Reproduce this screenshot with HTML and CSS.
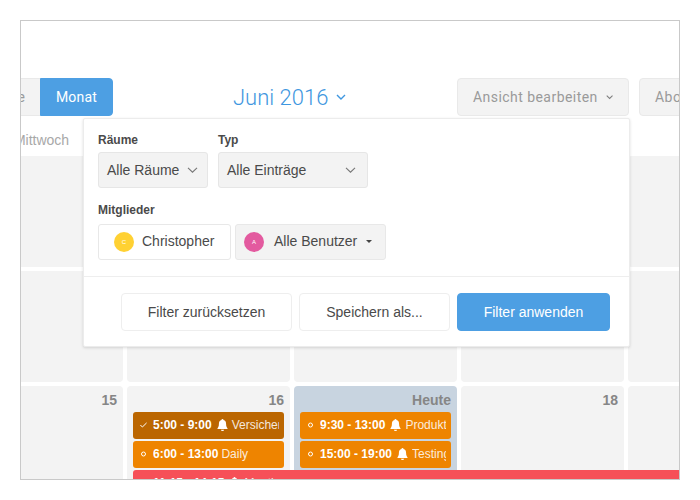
FILE: index.html
```html
<!DOCTYPE html>
<html lang="de">
<head>
<meta charset="utf-8">
<title>Kalender</title>
<link rel="stylesheet" href="styles.css">
</head>
<body>
<div class="frame">
  <header class="toolbar">
    <div class="segment">
      <button class="btn seg-off">Woche</button>
      <button class="btn seg-on">Monat</button>
    </div>
    <div class="title">Juni 2016<svg class="title-chev" width="10" height="6" viewBox="0 0 10 6"><path d="M1 1l4 4 4-4" fill="none" stroke="#3f97e0" stroke-width="1.400"/></svg></div>
    <div class="actions">
      <button class="btn tool">Ansicht bearbeiten
        <svg width="10" height="6" viewBox="0 0 10 6"><path d="M1 1l4 4 4-4" fill="none" stroke="#7d7d7d" stroke-width="1.400"/></svg>
      </button>
      <button class="btn tool">Abonnieren</button>
    </div>
  </header>

  <div class="weekdays">
    <div>Mittwoch</div><div>Donnerstag</div><div>Freitag</div><div>Samstag</div><div>Sonntag</div>
  </div>

  <div class="grid">
    <div class="cell"><span class="date">1</span></div>
    <div class="cell"><span class="date">2</span></div>
    <div class="cell"><span class="date">3</span></div>
    <div class="cell"><span class="date">4</span></div>
    <div class="cell"><span class="date">5</span></div>
    <div class="cell"><span class="date">8</span></div>
    <div class="cell"><span class="date">9</span></div>
    <div class="cell"><span class="date">10</span></div>
    <div class="cell"><span class="date">11</span></div>
    <div class="cell"><span class="date">12</span></div>
    <div class="cell"><span class="date">15</span></div>
    <div class="cell">
      <span class="date">16</span>
      <div class="event dark">
        <svg class="mark" width="7" height="6" viewBox="0 0 7 6"><path d="M.4 3l2 2L6.600.9" fill="none" stroke="#fff" stroke-width="1"/></svg>
        <div class="event-text"><b>5:00 - 9:00</b><svg class="bell" width="11" height="12" viewBox="0 0 11 12"><path d="M5.500 0a1 1 0 0 1 1 1.100c1.800.4 2.600 1.900 2.600 3.800 0 2.200.6 3.300 1.400 4.300v.8H.500v-.8c.8-1 1.400-2.100 1.400-4.300 0-1.900.8-3.400 2.600-3.800a1 1 0 0 1 1-1.100zM3.900 10.700h3.200a1.600 1.300 0 0 1-3.200 0z" fill="#fff"/></svg><span>Versicherung</span></div>
      </div>
      <div class="event">
        <svg class="mark" width="7" height="6" viewBox="0 0 7 6"><circle cx="3.500" cy="3" r="2" fill="none" stroke="#fff" stroke-width="1"/></svg>
        <div class="event-text"><b>6:00 - 13:00</b><span class="plain">Daily</span></div>
      </div>
      <div class="event red">
        <svg class="mark" width="7" height="6" viewBox="0 0 7 6"><circle cx="3.500" cy="3" r="2" fill="none" stroke="#fff" stroke-width="1"/></svg>
        <div class="event-text"><b>11:15 - 14:15</b><svg class="bell" width="11" height="12" viewBox="0 0 11 12"><path d="M5.500 0a1 1 0 0 1 1 1.100c1.800.4 2.600 1.900 2.600 3.800 0 2.200.6 3.300 1.400 4.300v.8H.500v-.8c.8-1 1.400-2.100 1.400-4.300 0-1.900.8-3.400 2.600-3.800a1 1 0 0 1 1-1.100zM3.900 10.700h3.200a1.600 1.300 0 0 1-3.200 0z" fill="#fff"/></svg><span>Meeting</span></div>
      </div>
    </div>
    <div class="cell today">
      <span class="date">Heute</span>
      <div class="event">
        <svg class="mark" width="7" height="6" viewBox="0 0 7 6"><circle cx="3.500" cy="3" r="2" fill="none" stroke="#fff" stroke-width="1"/></svg>
        <div class="event-text"><b>9:30 - 13:00</b><svg class="bell" width="11" height="12" viewBox="0 0 11 12"><path d="M5.500 0a1 1 0 0 1 1 1.100c1.800.4 2.600 1.900 2.600 3.800 0 2.200.6 3.300 1.400 4.300v.8H.500v-.8c.8-1 1.400-2.100 1.400-4.300 0-1.900.8-3.400 2.600-3.800a1 1 0 0 1 1-1.100zM3.900 10.700h3.200a1.600 1.300 0 0 1-3.200 0z" fill="#fff"/></svg><span>Produktion</span></div>
      </div>
      <div class="event">
        <svg class="mark" width="7" height="6" viewBox="0 0 7 6"><circle cx="3.500" cy="3" r="2" fill="none" stroke="#fff" stroke-width="1"/></svg>
        <div class="event-text"><b>15:00 - 19:00</b><svg class="bell" width="11" height="12" viewBox="0 0 11 12"><path d="M5.500 0a1 1 0 0 1 1 1.100c1.800.4 2.600 1.900 2.600 3.800 0 2.200.6 3.300 1.400 4.300v.8H.500v-.8c.8-1 1.400-2.100 1.400-4.300 0-1.900.8-3.400 2.600-3.800a1 1 0 0 1 1-1.100zM3.900 10.700h3.200a1.600 1.300 0 0 1-3.200 0z" fill="#fff"/></svg><span>Testing</span></div>
      </div>
    </div>
    <div class="cell"><span class="date">18</span></div>
    <div class="cell"><span class="date">19</span></div>
  </div>

  <section class="popup">
    <div class="popup-body">
      <div class="filters">
        <div class="field">
          <label class="label">Räume</label>
          <div class="select select-room">Alle Räume
            <svg width="11" height="6" viewBox="0 0 11 6"><path d="M1 .8l4.500 4.400L10 .8" fill="none" stroke="#777" stroke-width="1.100"/></svg>
          </div>
        </div>
        <div class="field">
          <label class="label">Typ</label>
          <div class="select select-type">Alle Einträge
            <svg width="11" height="6" viewBox="0 0 11 6"><path d="M1 .8l4.500 4.400L10 .8" fill="none" stroke="#777" stroke-width="1.100"/></svg>
          </div>
        </div>
      </div>
      <div class="field members">
        <label class="label">Mitglieder</label>
        <div class="member-row">
          <div class="member member-one"><span class="avatar yellow">C</span><span class="member-name">Christopher</span></div>
          <div class="member member-all"><span class="avatar pink">A</span><span class="member-name">Alle Benutzer</span><i class="caret"></i></div>
        </div>
      </div>
    </div>
    <footer class="popup-foot">
      <button class="btn foot foot-reset">Filter zurücksetzen</button>
      <button class="btn foot foot-save">Speichern als...</button>
      <button class="btn foot foot-apply">Filter anwenden</button>
    </footer>
  </section>
</div>
</body>
</html>
```
FILE: styles.css
```css
* { box-sizing: border-box; }
html, body { margin: 0; padding: 0; background: #fff; }
body { font-family: "Liberation Sans", Arial, sans-serif; color: #4a4a4a; }

.frame {
  position: relative;
  width: 660px;
  height: 460px;
  margin: 20px;
  border: 1px solid #c9c9c9;
  overflow: hidden;
  background: #fff;
}

.btn {
  font-family: inherit;
  font-size: 14px;
  height: 38px;
  border: 1px solid #e9e9e9;
  background: #f3f3f3;
  border-radius: 4px;
  padding: 0 15px;
  flex-shrink: 0;
}

.toolbar {
  display: flex;
  align-items: center;
  height: 38px;
  margin-top: 57px;
}
.segment {
  display: flex;
  justify-content: flex-end;
  width: 92px;
  flex-shrink: 0;
}
.seg-off {
  font-family: Roboto, sans-serif;
  color: #9a9a9a;
  border-radius: 0;
  border-right: 0;
}
.seg-on {
  font-family: Roboto, sans-serif;
  width: 73px;
  padding: 0;
  color: #fff;
  background: #4d9fe3;
  border-color: #4d9fe3;
  border-radius: 0 4px 4px 0;
  letter-spacing: .2px;
}
.title {
  display: flex;
  align-items: center;
  flex-shrink: 0;
  width: 112px;
  margin-left: 120px;
  font-family: Roboto, sans-serif;
  font-weight: 300;
  font-size: 22px;
  color: #3f97e0;
  white-space: nowrap;
}
.title-chev { margin-left: 8px; flex-shrink: 0; }
.actions {
  display: flex;
  gap: 10px;
  margin-left: 112px;
  flex-shrink: 0;
}
.tool {
  font-family: Roboto, sans-serif;
  color: #9a9a9a;
  letter-spacing: .45px;
  width: 172px;
  display: flex;
  align-items: center;
  gap: 8px;
  padding: 0 15px;
  white-space: nowrap;
}
.tool + .tool { width: 100px; }

.weekdays {
  display: grid;
  grid-template-columns: repeat(5, 163px);
  column-gap: 4px;
  margin-left: -61px;
  height: 40px;
  align-items: center;
  font-size: 14px;
  color: #a8a8a8;
  text-align: center;
}
.weekdays div { padding-top: 8px; }

.grid {
  display: grid;
  grid-template-columns: repeat(5, 163px);
  grid-auto-rows: 111px;
  gap: 4px;
  margin-left: -61px;
}
.cell {
  background: #f3f3f3;
  border-radius: 4px;
  padding: 0 6px;
  text-align: right;
}
.today { background: #c8d4e0; }
.date {
  display: block;
  height: 26px;
  line-height: 29px;
  font-size: 14px;
  font-weight: 700;
  color: #868686;
}

.event {
  display: flex;
  align-items: center;
  width: 151px;
  height: 27px;
  margin-bottom: 2px;
  padding: 0 5px 2px 7px;
  border-radius: 3px;
  background: #ee8400;
  color: #fff;
  font-size: 12px;
  text-align: left;
  white-space: nowrap;
}
.dark { background: #bb6600; }
.red {
  position: relative;
  z-index: 1;
  width: 560px;
  background: #f65058;
}
.mark { flex-shrink: 0; }
.event-text {
  display: flex;
  align-items: center;
  overflow: hidden;
  margin-left: 6px;
  flex: 1;
}
.event-text span { opacity: .85; }
.event-text .plain { margin-left: 3px; }
.bell { flex-shrink: 0; margin: 0 4px 0 5px; }

.popup {
  position: absolute;
  z-index: 2;
  left: 62px;
  top: 97px;
  width: 547px;
  height: 229px;
  background: #fff;
  border: 1px solid #ececec;
  border-radius: 2px;
  box-shadow: 0 1px 3px rgba(0, 0, 0, .14);
}
.popup-body { padding: 14px 14px 0; height: 158px; border-bottom: 1px solid #eeeeee; }
.filters { display: flex; gap: 10px; }
.label {
  display: block;
  font-size: 12px;
  font-weight: 700;
  line-height: 14px;
  margin-bottom: 5px;
  color: #4a4a4a;
}
.select {
  display: flex;
  align-items: center;
  justify-content: space-between;
  height: 36px;
  padding: 0 9px 0 8px;
  font-size: 14px;
  background: #f3f3f3;
  border: 1px solid #e6e6e6;
  border-radius: 3px;
}
.select-room { width: 110px; }
.select-type { width: 150px; padding-right: 11px; }
.members { margin-top: 15px; }
.members .label { margin-bottom: 7px; }
.member-row { display: flex; gap: 4px; }
.member {
  display: flex;
  align-items: center;
  height: 36px;
  font-size: 14px;
  border: 1px solid #e8e8e8;
  border-radius: 3px;
}
.member-name { margin-bottom: 2px; }
.member-one { width: 133px; padding-left: 15px; }
.member-all { width: 151px; padding-left: 8px; background: #f3f3f3; }
.avatar {
  display: flex;
  align-items: center;
  justify-content: center;
  width: 20px;
  height: 20px;
  margin-right: 8px;
  border-radius: 50%;
  color: #fff;
  font-size: 6px;
}
.member-all .avatar { margin-right: 10px; }
.yellow { background: #ffd133; }
.pink { background: #e35a9f; }
.caret {
  width: 0;
  height: 0;
  margin: 0 0 2px 9px;
  border: 3px solid transparent;
  border-top-color: #444;
  border-bottom: 0;
}

.popup-foot {
  display: flex;
  justify-content: flex-end;
  gap: 7px;
  padding: 16px 19px 0 0;
}
.foot {
  font-size: 14px;
  background: #fff;
  border-color: #eeeeee;
  color: #4a4a4a;
  padding: 0;
}
.foot-reset { width: 171px; }
.foot-save { width: 151px; }
.foot-apply { width: 153px; background: #4d9fe3; border-color: #4d9fe3; color: #fff; }
```
